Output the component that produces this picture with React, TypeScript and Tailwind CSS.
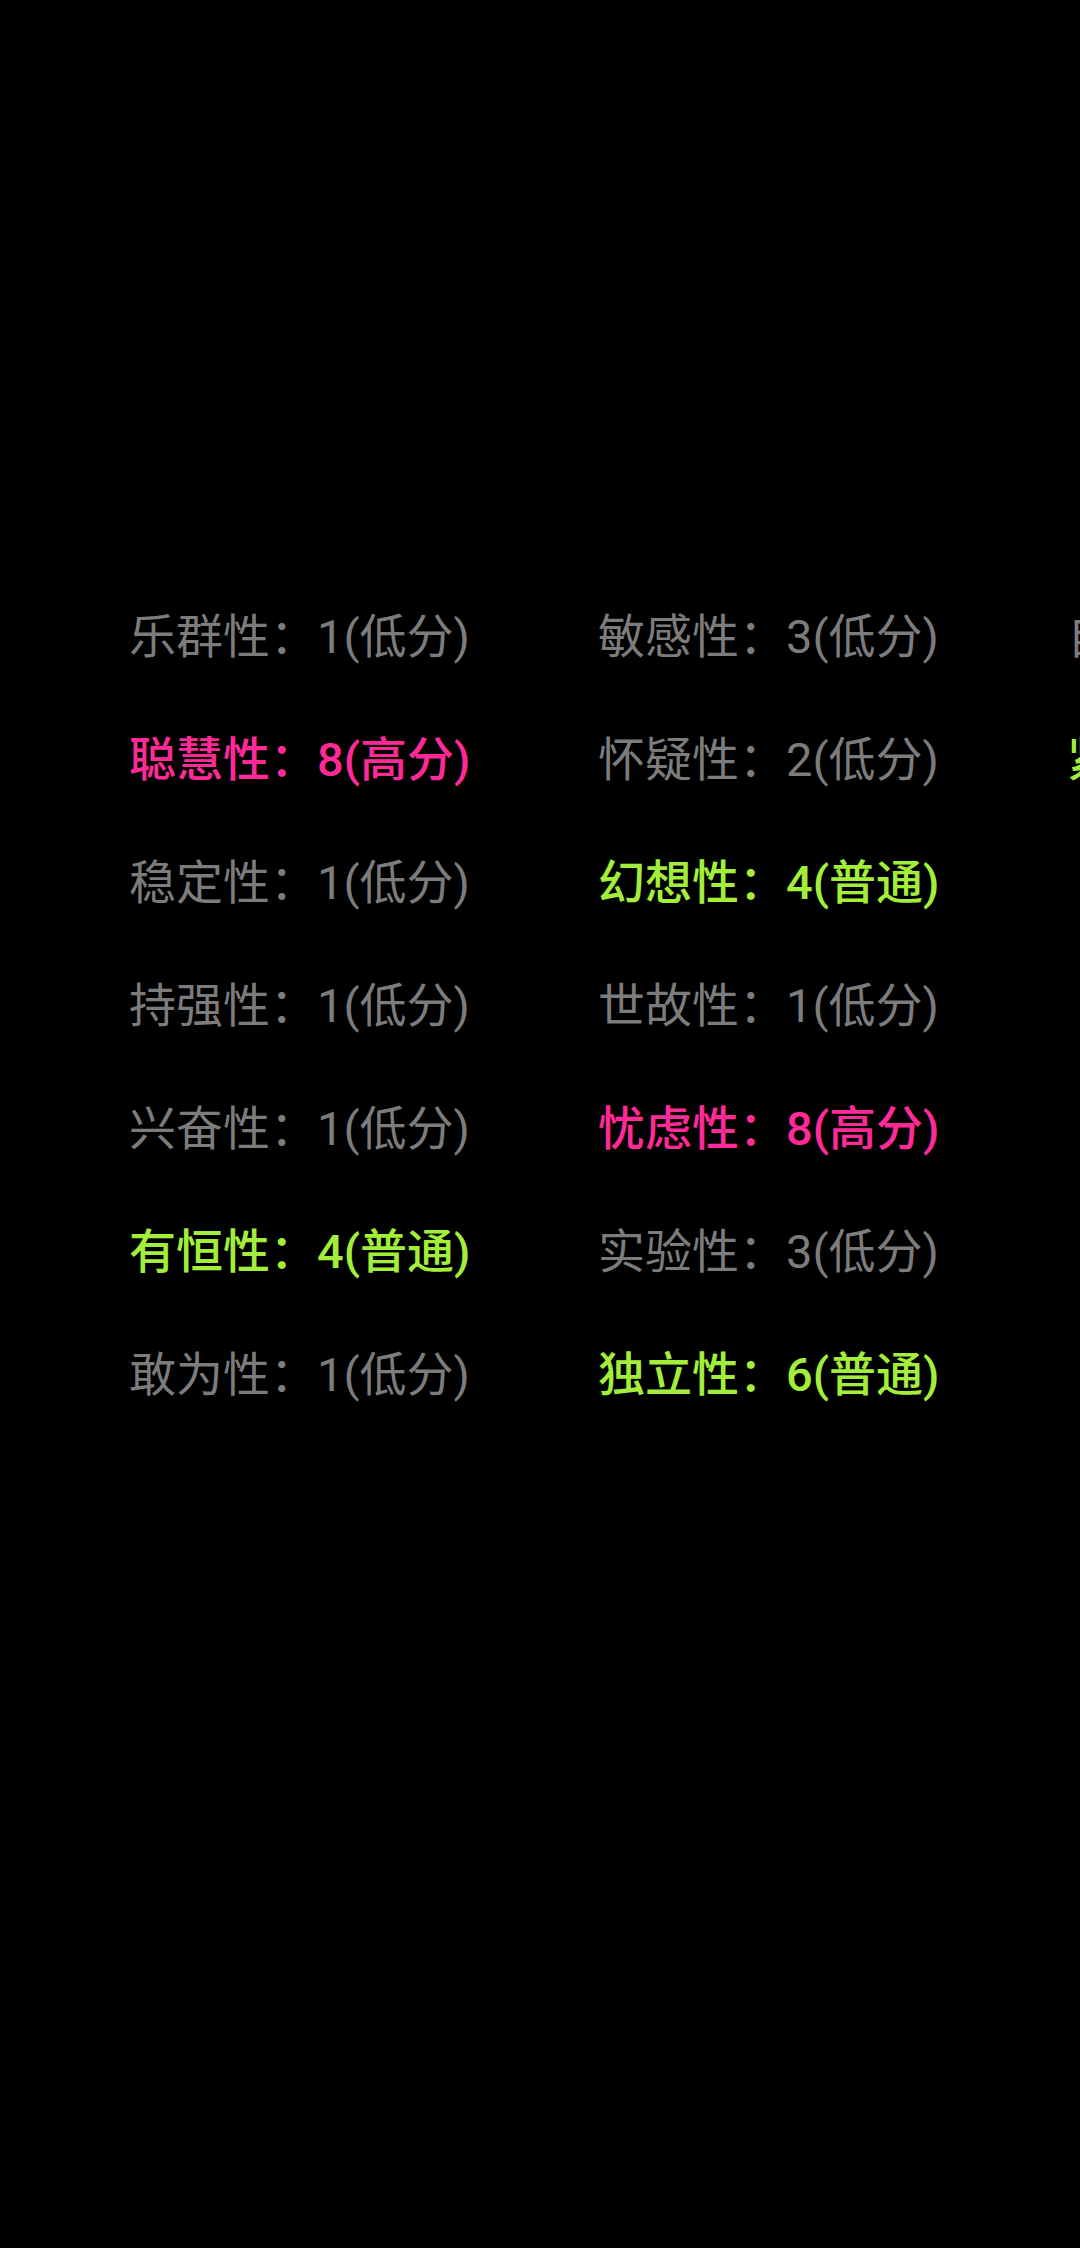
import React from 'react';

type Level = 'low' | 'mid' | 'high';

const columns: { name: string; score: number; level: Level }[][] = [
  [
    { name: '乐群性', score: 1, level: 'low' },
    { name: '聪慧性', score: 8, level: 'high' },
    { name: '稳定性', score: 1, level: 'low' },
    { name: '持强性', score: 1, level: 'low' },
    { name: '兴奋性', score: 1, level: 'low' },
    { name: '有恒性', score: 4, level: 'mid' },
    { name: '敢为性', score: 1, level: 'low' },
  ],
  [
    { name: '敏感性', score: 3, level: 'low' },
    { name: '怀疑性', score: 2, level: 'low' },
    { name: '幻想性', score: 4, level: 'mid' },
    { name: '世故性', score: 1, level: 'low' },
    { name: '忧虑性', score: 8, level: 'high' },
    { name: '实验性', score: 3, level: 'low' },
    { name: '独立性', score: 6, level: 'mid' },
  ],
  [
    { name: '自律性', score: 3, level: 'low' },
    { name: '紧张性', score: 5, level: 'mid' },
  ],
];

const label: Record<Level, string> = { low: '低分', mid: '普通', high: '高分' };

const tone: Record<Level, string> = {
  low: 'text-[#7c7c7c] font-normal',
  mid: 'text-[#a3ee3a] font-medium',
  high: 'text-[#ff2a98] font-medium',
};

export default function App() {
  return (
    <div className="w-[1080px] h-[2248px] bg-black overflow-hidden font-['Roboto','Noto_Sans_CJK_SC',sans-serif]">
      <div className="flex pt-[575px] pl-[129px]">
        {columns.map((col, i) => (
          <div key={i} className="w-[469px] shrink-0 flex flex-col">
            {col.map((f) => (
              <div key={f.name} className={`h-[123px] leading-[123px] text-[47px] whitespace-nowrap ${tone[f.level]}`}>
                {f.name}：{f.score}({label[f.level]})
              </div>
            ))}
          </div>
        ))}
      </div>
    </div>
  );
}
